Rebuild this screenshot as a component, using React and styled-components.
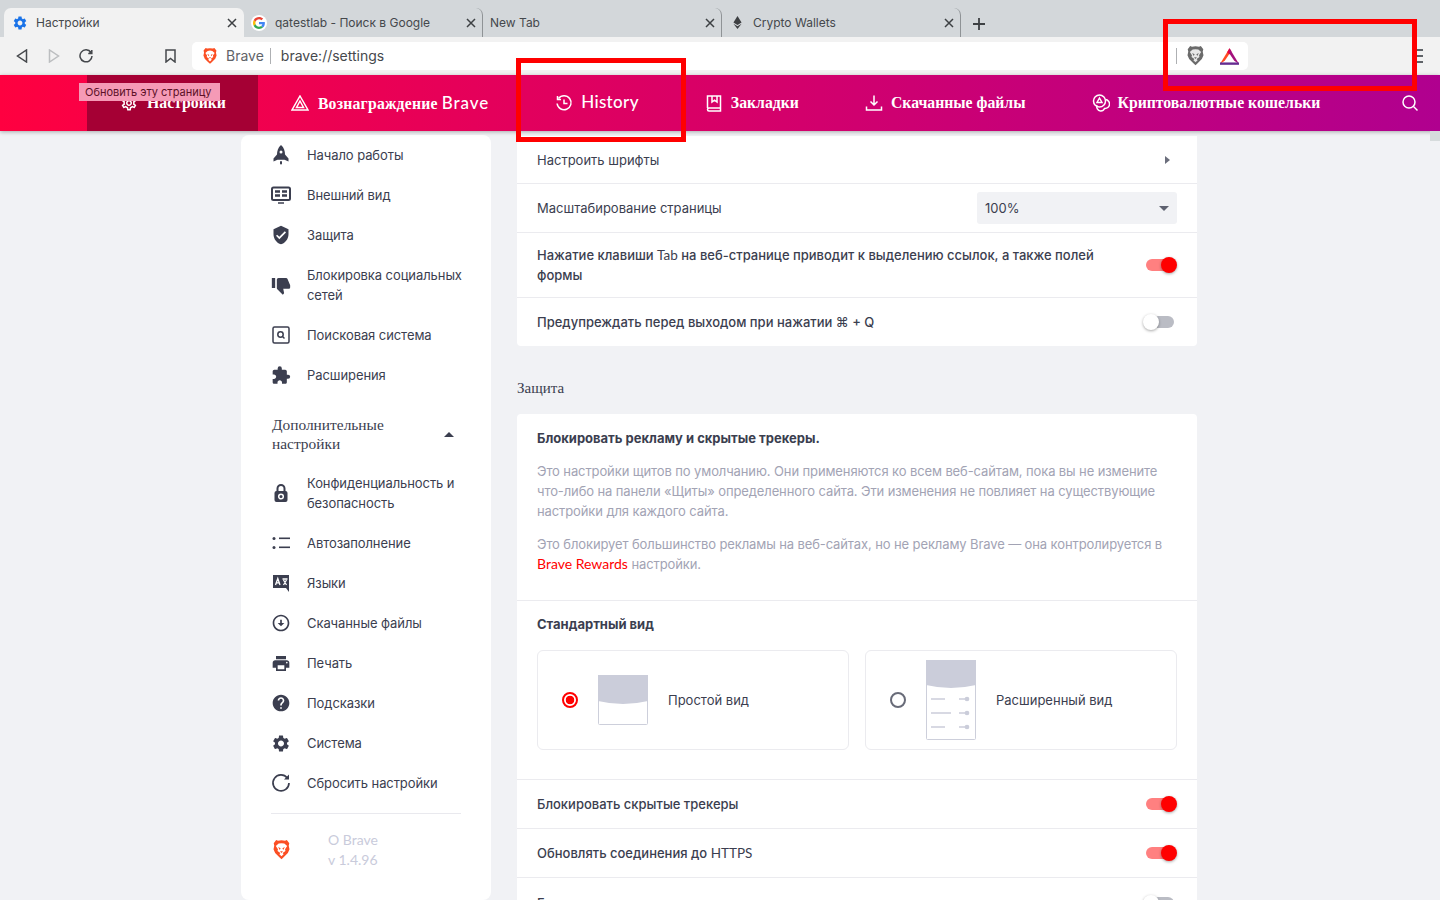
import React from 'react';
import styled, { createGlobalStyle } from 'styled-components';
import {
  MdVerifiedUser, MdThumbDown, MdExtension, MdPrint, MdHelp, MdSettings, MdOutlineSettings,
  MdOutlineArrowCircleDown,
} from 'react-icons/md';

const GlobalStyle = createGlobalStyle`
  html, body {
    margin: 0;
    height: 900px;
    overflow: hidden;
    background: #f1f2f5;
    font-family: "Inter", "Liberation Sans", sans-serif;
    -webkit-font-smoothing: antialiased;
  }
`;

const Page = styled.div`
  position: relative;
  width: 1440px;
  height: 900px;
  overflow: hidden;
`;

const TabStrip = styled.div`
  display: flex;
  align-items: flex-end;
  height: 37px;
  padding-left: 4px;
  box-sizing: border-box;
  background: #d3d7da;
`;

const Tab = styled.div`
  display: flex;
  align-items: center;
  width: ${(p) => (p.$active ? '240px' : '239px')};
  height: 29px;
  box-sizing: border-box;
  padding: ${(p) => (p.$active ? '0 7px 0 8px' : '0 6px 0 7px')};
  font-size: 12px;
  color: #45484c;
  background: ${(p) => (p.$active ? '#f2f2f2' : 'transparent')};
  border-radius: 7px 7px 0 0;
  border-right: ${(p) => (p.$sep ? '1px solid #8f9396' : 'none')};
`;

const TabIcon = styled.span`
  display: flex;
  justify-content: center;
  width: 16px;
  margin-right: 8px;
`;

const TabTitle = styled.span`
  flex: 1;
  white-space: nowrap;
`;

const NewTab = styled.span`
  display: flex;
  margin: 0 0 6px 11px;
`;

const Toolbar = styled.div`
  display: flex;
  align-items: center;
  height: 38px;
  box-sizing: border-box;
  padding: 0 17px 0 14px;
  background: #f2f2f2;
`;

const ToolButton = styled.span`
  display: flex;
  justify-content: center;
  width: 16px;
  margin-right: ${(p) => p.$gap}px;
`;

const Address = styled.div`
  display: flex;
  align-items: center;
  width: 1056px;
  height: 28px;
  box-sizing: border-box;
  padding: 0 9px 0 11px;
  background: #fff;
  border-radius: 5px;
  font-size: 14px;
  line-height: 26px;
  color: #5f6368;
`;

const AddressBrand = styled.span`
  margin-left: 9px;
`;

const AddressSep = styled.span`
  width: 1px;
  height: 16px;
  margin: ${(p) => p.$margin};
  background: #aeb0b3;
`;

const AddressUrl = styled.span`
  flex: 1;
  color: #45484c;
`;

const BatSlot = styled.span`
  display: flex;
  margin-left: 16px;
`;

const Hamburger = styled.div`
  display: flex;
  flex-direction: column;
  gap: 4px;
  width: 11px;
  margin-left: auto;
`;

const HamburgerLine = styled.span`
  height: 2px;
  background: #5f6368;
`;

const Header = styled.header`
  position: relative;
  display: flex;
  align-items: stretch;
  height: 56px;
  padding-left: 87px;
  background: linear-gradient(90deg, #ff0040 0%, #b0008f 100%);
  box-shadow: 0 1px 4px rgba(0, 0, 0, 0.3);
  color: #fff;
`;

const NavItem = styled.div`
  display: flex;
  align-items: center;
  gap: ${(p) => (p.$active ? '9px' : '8px')};
  padding: ${(p) => (p.$active ? '0 32px 0 33px' : '0 33px')};
  background: ${(p) => (p.$active ? '#a50034' : 'transparent')};
  font-family: "Liberation Serif", serif;
  font-weight: 700;
  font-size: 15.75px;
  white-space: nowrap;
`;

const NavLatin = styled.span`
  margin-bottom: ${(p) => (p.$solo ? '3px' : '0')};
  font-family: "Lato", sans-serif;
  font-weight: 500;
  font-size: 17px;
  line-height: 1;
  letter-spacing: ${(p) => (p.$solo ? '0.35px' : '0.9px')};
`;

const RewardsLabel = styled.span`
  margin-left: 1px;
  letter-spacing: 0.2px;
`;

const NavSearch = styled.div`
  display: flex;
  margin-left: auto;
  align-items: center;
  padding-right: 21px;
`;

const Tooltip = styled.div`
  position: absolute;
  left: 79px;
  top: 83px;
  width: 141px;
  height: 18px;
  box-sizing: border-box;
  padding-left: 6px;
  line-height: 18px;
  font-size: 11px;
  color: #5c1027;
  background: #f59ab6;
  white-space: nowrap;
`;

const Highlight = styled.div`
  position: absolute;
  left: ${(p) => p.$left}px;
  top: ${(p) => p.$top}px;
  width: ${(p) => p.$width}px;
  height: ${(p) => p.$height}px;
  box-sizing: border-box;
  border: 5px solid #ff0000;
`;

const ScrollMark = styled.div`
  position: absolute;
  right: 0;
  top: 131px;
  width: 10px;
  height: 10px;
  background: #d6dbdc;
`;

const Main = styled.main`
  display: flex;
  align-items: flex-start;
  gap: 26px;
  padding-left: 241px;
`;

const Sidebar = styled.nav`
  width: 250px;
  height: 765px;
  margin-top: 4px;
  box-sizing: border-box;
  padding: 0 30px;
  background: #fff;
  border-radius: 8px;
`;

const SideItem = styled.div`
  display: flex;
  align-items: center;
  min-height: 40px;
  margin-right: -4px;
  padding: ${(p) => (p.$tall ? '10px 0' : '0')};
  font-size: 13px;
  line-height: 20px;
  letter-spacing: -0.08px;
  color: #3b3e4f;
`;

const SideIcon = styled.span`
  display: flex;
  flex: none;
  justify-content: center;
  width: 20px;
  margin-right: ${(p) => (p.$flush ? '0' : '16px')};
  color: #3b3e4f;
  transform: ${(p) => (p.$flip ? 'scaleX(-1)' : 'none')};
`;

const Advanced = styled.div`
  display: flex;
  align-items: center;
  justify-content: space-between;
  height: 68px;
  box-sizing: border-box;
  padding: 10px 7px 0 1px;
  font-family: "Liberation Serif", serif;
  font-size: 15.4px;
  line-height: 19px;
  color: #3b3e4f;
`;

const Caret = styled.span`
  width: 0;
  height: 0;
  border-left: 5px solid transparent;
  border-right: 5px solid transparent;
  border-bottom: 5px solid #3b3e4f;
`;

const SideDivider = styled.div`
  height: 1px;
  margin: 10px 0 0;
  background: #e9e9ee;
`;

const About = styled.div`
  display: flex;
  align-items: center;
  padding-top: 16px;
`;

const AboutText = styled.div`
  margin-left: 37px;
  font-family: "Lato", sans-serif;
  font-size: 14px;
  line-height: 20px;
  color: #c9cbdb;
`;

const Content = styled.div`
  width: 680px;
  margin-top: 5px;
`;

const Card = styled.section`
  background: #fff;
  border-radius: ${(p) => (p.$openTop ? '0 0 4px 4px' : '4px')};
`;

const Row = styled.div`
  display: flex;
  align-items: center;
  justify-content: space-between;
  min-height: ${(p) => p.$height || 49}px;
  box-sizing: border-box;
  padding: 0 20px;
  border-top: ${(p) => (p.$first ? 'none' : '1px solid #ebebef')};
  font-size: 13px;
  font-weight: 500;
  line-height: 20px;
  color: #3b3e4f;
`;

const RowLabel = styled.span`
  max-width: ${(p) => p.$max || 'none'};
  font-weight: ${(p) => (p.$plain ? 400 : 500)};
`;

const Latin = styled.span`
  font-family: "Lato", sans-serif;
  font-weight: 400;
  font-size: 13.5px;
`;

const Chevron = styled.span`
  width: 0;
  height: 0;
  margin-right: 7px;
  border-top: 4px solid transparent;
  border-bottom: 4px solid transparent;
  border-left: 5px solid #6b6e7c;
`;

const SelectBox = styled.div`
  display: flex;
  align-items: center;
  justify-content: space-between;
  width: 200px;
  height: 32px;
  box-sizing: border-box;
  padding: 0 8px;
  background: #f1f2f5;
  border-radius: 3px;
  font-size: 13px;
  font-weight: 400;
`;

const SelectArrow = styled.span`
  width: 0;
  height: 0;
  border-left: 5px solid transparent;
  border-right: 5px solid transparent;
  border-top: 5px solid #5f6270;
`;

const Toggle = styled.span`
  position: relative;
  display: block;
  flex: none;
  width: 28px;
  height: 12px;
  margin-right: 3px;
  border-radius: 6px;
  background: ${(p) => (p.$on ? '#ff8080' : '#babcc4')};
  &::after {
    content: "";
    position: absolute;
    top: -2px;
    left: ${(p) => (p.$on ? '15px' : '-3px')};
    width: 16px;
    height: 16px;
    border-radius: 50%;
    background: ${(p) => (p.$on ? '#ff0000' : '#fff')};
    box-shadow: 0 1px 3px rgba(0, 0, 0, 0.35);
  }
`;

const SectionTitle = styled.h2`
  margin: 0;
  padding: 32px 0 16px;
  font-family: "Liberation Serif", serif;
  font-size: 15px;
  font-weight: 400;
  line-height: 20px;
  color: #3b3e4f;
`;

const Intro = styled.div`
  height: 186px;
  box-sizing: border-box;
  padding: 14px 20px 0;
`;

const BlockTitle = styled.div`
  font-size: 13px;
  font-weight: 700;
  line-height: 20px;
  color: #3b3e4f;
`;

const Para = styled.p`
  margin: 13px 0 0;
  font-size: 13px;
  line-height: 20px;
  letter-spacing: -0.11px;
  color: #a2a3b4;
`;

const RedLink = styled.span`
  font-family: "Lato", sans-serif;
  font-size: 14px;
  letter-spacing: 0;
  color: #ff0000;
`;

const ViewSection = styled.div`
  height: 179px;
  box-sizing: border-box;
  padding: 13px 20px 0;
  border-top: 1px solid #ebebef;
`;

const Options = styled.div`
  display: flex;
  gap: 16px;
  margin-top: 16px;
`;

const OptionCard = styled.div`
  display: flex;
  flex: 1;
  align-items: center;
  gap: 20px;
  height: 100px;
  box-sizing: border-box;
  padding-left: 25px;
  border: 1px solid #ebebef;
  border-radius: 6px;
  font-size: 13px;
  color: #3b3e4f;
`;

const Radio = styled.span`
  flex: none;
  width: 16px;
  height: 16px;
  margin-left: -1px;
  box-sizing: border-box;
  border-radius: 50%;
  border: 2px solid ${(p) => (p.$on ? '#ff0000' : '#686b78')};
  background: ${(p) => (p.$on ? 'radial-gradient(circle, #ff0000 0 4px, #fff 4.6px)' : '#fff')};
`;

const BraveLogo = ({ size = 16, fill = '#fb4f24', face = '#fff' }) => (
  <svg width={size} height={size * 1.15} viewBox="0 0 24 27.6">
    <path fill={fill} d="M12 0.5 L17 1 L19.5 0 L23 4.5 L22.2 8 L23.3 13 L21 18.5 L15 24.5 L12 27.2 L9 24.5 L3 18.5 L0.7 13 L1.8 8 L1 4.5 L4.5 0 L7 1 Z" />
    <path fill={face} d="M12 4.5 L16 5 L20 8.5 L17 13 L17.6 15.500 L13.600 18.500 L15 20 L12 23 L9 20 L10.400 18.500 L6.400 15.500 L7 13 L4 8.500 L8 5 Z" />
    <path fill={fill} d="M7.300 10 L10.800 11.800 L9.500 14 Z M16.700 10 L13.200 11.800 L14.500 14 Z M10 16 L14 16 L12 18.200 Z" />
  </svg>
);

const BatLogo = () => (
  <svg width="19" height="17" viewBox="0 0 24 21">
    <path fill="#ff4b24" d="M12 0 L0 20 L6 16 L12 7 Z" />
    <path fill="#e8003f" d="M12 0 L9 5 L12 8 L14.500 4 Z" />
    <path fill="#a3117c" d="M12 0 L24 20 L18 16 L12 7 Z" />
    <path fill="#662d91" d="M0 18 L24 18 L24 21 L0 21 Z" />
    <path fill="#fff" d="M12 8 L17.500 17 L6.500 17 Z" />
  </svg>
);

const GoogleLogo = () => (
  <svg width="16" height="16" viewBox="0 0 48 48">
    <circle cx="24" cy="24" r="24" fill="#fff" />
    <path fill="#ea4335" d="M24 13c3 0 5.400 1 7.400 2.800l5-5C33.300 8 29 6 24 6 17 6 11 10 8 16l5.900 4.500C15.300 16.200 19.300 13 24 13z" />
    <path fill="#4285f4" d="M41.600 24.400c0-1.300-.1-2.500-.3-3.700H24v7h10c-.4 2.300-1.700 4.200-3.700 5.500l5.700 4.400c3.400-3.100 5.600-7.700 5.600-13.200z" />
    <path fill="#fbbc05" d="M13.900 28.600c-.4-1.400-.7-2.900-.7-4.600s.3-3.200.7-4.600L8 15.900C6.700 18.300 6 21 6 24s.7 5.700 2 8.100l5.900-3.500z" />
    <path fill="#34a853" d="M24 42c4.900 0 9-1.600 12-4.400l-5.700-4.400c-1.600 1.100-3.700 1.700-6.300 1.700-4.700 0-8.700-3.200-10.100-7.400L8 32c3 6 9 10 16 10z" />
  </svg>
);

const EthLogo = () => (
  <svg width="9" height="13" viewBox="0 0 10 16">
    <path fill="#3d3f42" d="M5 0 L10 8 L5 11 L0 8 Z" />
    <path fill="#3d3f42" d="M0 9.500 L5 12.500 L10 9.500 L5 16 Z" />
  </svg>
);

const CloseIcon = () => (
  <svg width="10" height="10" viewBox="0 0 10 10" stroke="#3d4043" strokeWidth="1.5">
    <path d="M1 1 L9 9 M9 1 L1 9" />
  </svg>
);

const strokeIcon = { fill: 'none', stroke: 'currentColor', strokeWidth: 1.5 };

const RocketIcon = () => (
  <svg width="18" height="20" viewBox="0 0 18 20" fill="#3b3e4f">
    <path d="M9 0 C12 2.500 13 6 13 9.500 L16.500 13.500 V16.500 L12.500 14.800 H5.500 L1.500 16.500 V13.500 L5 9.500 C5 6 6 2.500 9 0 Z" />
    <rect x="8" y="16" width="2" height="3.500" rx="1" />
    <circle cx="9" cy="7" r="1.500" fill="#fff" />
  </svg>
);

const AppearanceIcon = () => (
  <svg width="20" height="18" viewBox="0 0 20 18" {...strokeIcon}>
    <rect x="1" y="1.500" width="18" height="12.500" rx="1.500" strokeWidth="2" />
    <path d="M7 17 H13" strokeWidth="1.500" />
    <path d="M4 5.500 H9 M11 5.500 H16 M4 9.500 H9 M11 9.500 H16" strokeWidth="2.400" />
  </svg>
);

const SearchEngineIcon = () => (
  <svg width="18" height="18" viewBox="0 0 18 18" {...strokeIcon}>
    <rect x="1" y="1" width="16" height="16" rx="1.500" />
    <circle cx="8.500" cy="8.500" r="2.700" />
    <path d="M10.500 10.500 L12.500 12.500" />
  </svg>
);

const LockIcon = () => (
  <svg width="14" height="18" viewBox="0 0 14 18">
    <path fill="none" stroke="#3b3e4f" strokeWidth="2" d="M3.500 8 V4.500 a3.500 3.500 0 0 1 7 0 V8" />
    <rect x="0.500" y="7" width="13" height="11" rx="2" fill="#3b3e4f" />
    <circle cx="7" cy="12.500" r="2.300" fill="none" stroke="#fff" strokeWidth="1.500" />
  </svg>
);

const ListIcon = () => (
  <svg width="18" height="14" viewBox="0 0 18 14" fill="#3b3e4f">
    <circle cx="2" cy="2.500" r="1.500" />
    <circle cx="2" cy="11.500" r="1.500" />
    <rect x="7" y="1.500" width="11" height="1.600" />
    <rect x="7" y="10.500" width="11" height="1.600" />
  </svg>
);

const LanguageIcon = () => (
  <svg width="18" height="18" viewBox="0 0 18 18">
    <path fill="#3b3e4f" d="M1 1 H17 V18 L14 14 H1 Z" />
    <path fill="none" stroke="#fff" strokeWidth="1.300" d="M3.500 11 L5.800 4.500 L8 11 M4.400 8.800 H7.200 M10.500 5 H15.500 M11.500 6 L14.500 11 M14.500 6 L11.500 11" />
  </svg>
);

const ResetIcon = () => (
  <svg width="20" height="20" viewBox="0 0 20 20" fill="none" stroke="#3b3e4f" strokeWidth="1.700">
    <path d="M16.300 5 A8 8 0 1 0 18 10" />
    <path d="M18 1.500 V6.500 H13" fill="#3b3e4f" stroke="none" />
  </svg>
);

const HistoryIcon = () => (
  <svg width="18" height="18" viewBox="0 0 18 18" {...strokeIcon}>
    <path d="M3.500 4.500 A7 7 0 1 1 2.100 9.500" />
    <path d="M2.500 2 V5.500 H6 M9 5.500 V9.500 H12.500" />
  </svg>
);

const BookmarksIcon = () => (
  <svg width="18" height="18" viewBox="0 0 18 18" {...strokeIcon}>
    <path d="M2.500 14 V2 H15.500 V14 H4 a1.500 1.500 0 0 0 0 3 H15.500 V14" />
    <path d="M7 2 V8 L9.500 6.200 L12 8 V2" />
  </svg>
);

const DownloadIcon = () => (
  <svg width="18" height="18" viewBox="0 0 18 18" {...strokeIcon}>
    <path d="M9 1.500 V11 M5.500 7.500 L9 11 L12.500 7.500 M1.500 12.500 V16 H16.500 V12.500" />
  </svg>
);

const WalletIcon = () => (
  <svg width="18" height="18" viewBox="0 0 18 18" {...strokeIcon}>
    <circle cx="7.500" cy="7" r="6" />
    <path d="M13.500 5.500 a4.500 4.500 0 0 1 -1 9 a4 4 0 0 1 -4 2.500 a4.500 4.500 0 0 1 -3.500 -6" />
    <path d="M7.500 4 L10 8.500 H5 Z" />
  </svg>
);

const RewardsIcon = () => (
  <svg width="18" height="16" viewBox="0 0 18 16" {...strokeIcon}>
    <path d="M9 1 L17 15 H1 Z M9 6 L12.500 12.500 H5.500 Z" />
  </svg>
);

const ThumbSimple = () => (
  <svg width="50" height="50" viewBox="0 0 50 50">
    <rect x="0.500" y="0.500" width="49" height="49" rx="1" fill="#fff" stroke="#cdcfdb" />
    <path fill="#cbcdda" d="M0 0 H50 V26 Q25 32 0 26 Z" />
  </svg>
);

const ThumbExpanded = () => (
  <svg width="50" height="80" viewBox="0 0 50 80">
    <rect x="0.500" y="0.500" width="49" height="79" rx="1" fill="#fff" stroke="#cdcfdb" />
    <path fill="#cbcdda" d="M0 0 H50 V25 Q25 31 0 25 Z" />
    <g stroke="#cbcdda" strokeWidth="1.500" fill="#cbcdda">
      <path d="M5 39 H19 M5 53 H25 M5 67 H19 M33 39 H40 M33 53 H40 M33 67 H40" />
      <circle cx="41" cy="39" r="1.600" />
      <circle cx="41" cy="53" r="1.600" />
      <circle cx="41" cy="67" r="1.600" />
    </g>
  </svg>
);

const tabs = [
  { title: 'Настройки', icon: <MdSettings size={16} color="#1a73e8" />, active: true },
  { title: 'qatestlab - Поиск в Google', icon: <GoogleLogo />, sep: true },
  { title: 'New Tab', sep: true },
  { title: 'Crypto Wallets', icon: <EthLogo />, sep: true },
];

const basicMenu = [
  { label: 'Начало работы', icon: <RocketIcon /> },
  { label: 'Внешний вид', icon: <AppearanceIcon /> },
  { label: 'Защита', icon: <MdVerifiedUser size={22} /> },
  { label: 'Блокировка социальных сетей', icon: <MdThumbDown size={21} />, tall: true, flip: true },
  { label: 'Поисковая система', icon: <SearchEngineIcon /> },
  { label: 'Расширения', icon: <MdExtension size={21} /> },
];

const advancedMenu = [
  { label: 'Конфиденциальность и безопасность', icon: <LockIcon />, tall: true },
  { label: 'Автозаполнение', icon: <ListIcon /> },
  { label: 'Языки', icon: <LanguageIcon /> },
  { label: 'Скачанные файлы', icon: <MdOutlineArrowCircleDown size={22} /> },
  { label: 'Печать', icon: <MdPrint size={21} /> },
  { label: 'Подсказки', icon: <MdHelp size={22} /> },
  { label: 'Система', icon: <MdSettings size={21} /> },
  { label: 'Сбросить настройки', icon: <ResetIcon /> },
];

const SideRow = ({ item }) => (
  <SideItem $tall={item.tall}>
    <SideIcon $flip={item.flip}>{item.icon}</SideIcon>
    <span>{item.label}</span>
  </SideItem>
);

const App = () => (
  <Page>
    <GlobalStyle />
    <TabStrip>
      {tabs.map((tab) => (
        <Tab key={tab.title} $active={tab.active} $sep={tab.sep}>
          {tab.icon && <TabIcon>{tab.icon}</TabIcon>}
          <TabTitle>{tab.title}</TabTitle>
          <CloseIcon />
        </Tab>
      ))}
      <NewTab>
        <svg width="14" height="14" viewBox="0 0 14 14" stroke="#3d4043" strokeWidth="1.800">
          <path d="M7 1 V13 M1 7 H13" />
        </svg>
      </NewTab>
    </TabStrip>

    <Toolbar>
      <ToolButton $gap={16}>
        <svg width="12" height="14" viewBox="0 0 12 14" fill="none" stroke="#45484c" strokeWidth="1.500">
          <path d="M10.500 1 V13 L1.500 7 Z" />
        </svg>
      </ToolButton>
      <ToolButton $gap={16}>
        <svg width="12" height="14" viewBox="0 0 12 14" fill="none" stroke="#bcbec0" strokeWidth="1.500">
          <path d="M1.500 1 V13 L10.500 7 Z" />
        </svg>
      </ToolButton>
      <ToolButton $gap={68}>
        <svg width="14" height="14" viewBox="0 0 14 14" fill="none" stroke="#45484c" strokeWidth="1.500">
          <path d="M12 3.500 A6 6 0 1 0 13 7" />
          <path d="M12.800 1 V4.500 H9.300" fill="#45484c" />
        </svg>
      </ToolButton>
      <ToolButton $gap={14}>
        <svg width="11" height="14" viewBox="0 0 11 14" fill="none" stroke="#45484c" strokeWidth="1.500">
          <path d="M1 1 H10 V13 L5.500 9.500 L1 13 Z" />
        </svg>
      </ToolButton>
      <Address>
        <BraveLogo size={14} />
        <AddressBrand>Brave</AddressBrand>
        <AddressSep $margin="0 10px 0 6px" />
        <AddressUrl>brave://settings</AddressUrl>
        <AddressSep $margin="0 10px 0 0" />
        <BraveLogo size={17} fill="#6b6b6b" face="#e8e8e8" />
        <BatSlot><BatLogo /></BatSlot>
      </Address>
      <Hamburger>
        <HamburgerLine />
        <HamburgerLine />
        <HamburgerLine />
      </Hamburger>
    </Toolbar>

    <Header>
      <NavItem $active>
        <MdOutlineSettings size={18} />
        Настройки
      </NavItem>
      <NavItem>
        <RewardsIcon />
        <RewardsLabel>
          Вознаграждение
          {' '}
          <NavLatin>Brave</NavLatin>
        </RewardsLabel>
      </NavItem>
      <NavItem>
        <HistoryIcon />
        <NavLatin $solo>History</NavLatin>
      </NavItem>
      <NavItem>
        <BookmarksIcon />
        Закладки
      </NavItem>
      <NavItem>
        <DownloadIcon />
        Скачанные файлы
      </NavItem>
      <NavItem>
        <WalletIcon />
        Криптовалютные кошельки
      </NavItem>
      <NavSearch>
        <svg width="18" height="18" viewBox="0 0 18 18" fill="none" stroke="#fff" strokeWidth="1.500">
          <circle cx="8" cy="8" r="6" />
          <path d="M12.500 12.500 L16.500 16.500" />
        </svg>
      </NavSearch>
    </Header>

    <Main>
      <Sidebar>
        {basicMenu.map((item) => <SideRow key={item.label} item={item} />)}
        <Advanced>
          <span>
            Дополнительные
            <br />
            настройки
          </span>
          <Caret />
        </Advanced>
        {advancedMenu.map((item) => <SideRow key={item.label} item={item} />)}
        <SideDivider />
        <About>
          <SideIcon $flush><BraveLogo size={17} /></SideIcon>
          <AboutText>
            O Brave
            <br />
            v 1.4.96
          </AboutText>
        </About>
      </Sidebar>

      <Content>
        <Card $openTop>
          <Row $first $height={47}>
            <RowLabel $plain>Настроить шрифты</RowLabel>
            <Chevron />
          </Row>
          <Row>
            <RowLabel $plain>Масштабирование страницы</RowLabel>
            <SelectBox>
              100%
              <SelectArrow />
            </SelectBox>
          </Row>
          <Row $height={65}>
            <RowLabel $max="580px">
              Нажатие клавиши
              {' '}
              <Latin>Tab</Latin>
              {' '}
              на веб-странице приводит к выделению ссылок, а также полей формы
            </RowLabel>
            <Toggle $on />
          </Row>
          <Row>
            <RowLabel>Предупреждать перед выходом при нажатии ⌘ + Q</RowLabel>
            <Toggle />
          </Row>
        </Card>

        <SectionTitle>Защита</SectionTitle>

        <Card>
          <Intro>
            <BlockTitle>Блокировать рекламу и скрытые трекеры.</BlockTitle>
            <Para>
              Это настройки щитов по умолчанию. Они применяются ко всем веб-сайтам, пока вы не измените что-либо на панели «Щиты» определенного сайта. Эти изменения не повлияет на существующие настройки для каждого сайта.
            </Para>
            <Para>
              Это блокирует большинство рекламы на веб-сайтах, но не рекламу Brave — она контролируется в
              {' '}
              <RedLink>Brave Rewards</RedLink>
              {' '}
              настройки.
            </Para>
          </Intro>
          <ViewSection>
            <BlockTitle>Стандартный вид</BlockTitle>
            <Options>
              <OptionCard>
                <Radio $on />
                <ThumbSimple />
                Простой вид
              </OptionCard>
              <OptionCard>
                <Radio />
                <ThumbExpanded />
                Расширенный вид
              </OptionCard>
            </Options>
          </ViewSection>
          <Row>
            <RowLabel>Блокировать скрытые трекеры</RowLabel>
            <Toggle $on />
          </Row>
          <Row>
            <RowLabel>
              Обновлять соединения до
              {' '}
              <Latin>HTTPS</Latin>
            </RowLabel>
            <Toggle $on />
          </Row>
          <Row $height={50}>
            <RowLabel>Блокировать скрипты</RowLabel>
            <Toggle />
          </Row>
        </Card>
      </Content>
    </Main>

    <Tooltip>Обновить эту страницу</Tooltip>
    <Highlight $left={516} $top={58} $width={170} $height={84} />
    <Highlight $left={1163} $top={19} $width={254} $height={72} />
    <ScrollMark />
  </Page>
);

export default App;
